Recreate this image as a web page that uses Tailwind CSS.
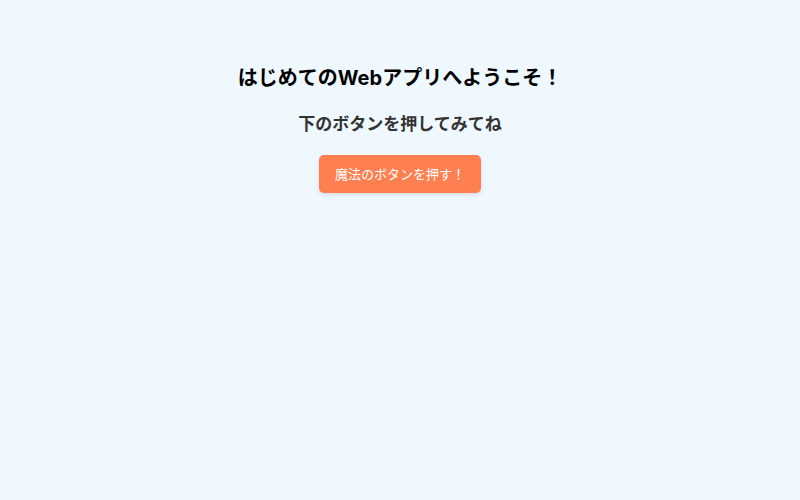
<!DOCTYPE html>
<html lang="ja">
  <head>
    <meta charset="UTF-8" />
    <meta name="viewport" content="width=device-width, initial-scale=1.0" />
    <title>はじめてのWebアプリ</title>
    <script src="https://cdn.jsdelivr.net/npm/@tailwindcss/browser@4"></script>
  </head>
  <body
    class="min-h-screen bg-[#f0f8ff] pt-[63px] text-center font-[Inter,'Noto_Sans_CJK_JP',sans-serif]"
  >
    <main class="flex flex-col items-center gap-4">
      <h1 class="text-[20px] leading-[30px] font-bold text-black">
        はじめてのWebアプリへようこそ！
      </h1>
      <p id="message" class="text-[17px] leading-[30px] font-bold text-[#333333]">
        下のボタンを押してみてね
      </p>
      <!-- 魔法のボタン -->
      <button
        id="magicButton"
        type="button"
        class="cursor-pointer rounded-[5px] bg-[#ff7f50] px-4 py-2 text-[13px] leading-[22px] text-white shadow-[0_2px_4px_rgba(0,0,0,0.1)] hover:bg-[#ff6347]"
      >
        魔法のボタンを押す！
      </button>
    </main>

    <script>
      document.getElementById("magicButton").addEventListener("click", () => {
        document.getElementById("message").textContent = "魔法がかかりました！";
      });
    </script>
  </body>
</html>
